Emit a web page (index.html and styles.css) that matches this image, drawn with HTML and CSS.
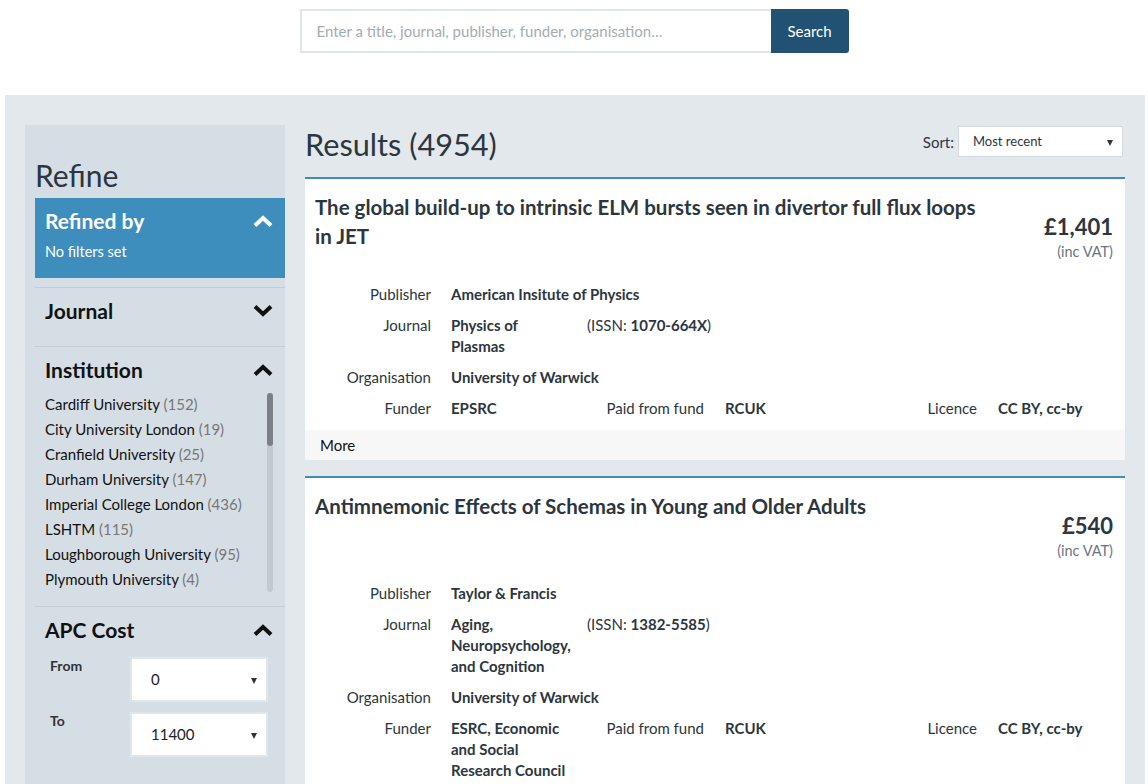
FILE: index.html
```html
<!DOCTYPE html>
<html lang="en">
<head>
<meta charset="utf-8">
<title>Results</title>
<link rel="stylesheet" href="styles.css">
</head>
<body>
<form class="search">
  <input class="search-input" type="text" placeholder="Enter a title, journal, publisher, funder, organisation…">
  <button class="search-btn" type="button">Search</button>
</form>

<div class="page">
  <aside class="sidebar">
    <h2 class="refine-title">Refine</h2>

    <div class="refined-by">
      <div class="facet-head">
        <span>Refined by</span>
        <svg class="chev" viewBox="0 0 20 12" width="20" height="12"><polyline points="2,10.5 10,3 18,10.5" fill="none" stroke="#fff" stroke-width="4"/></svg>
      </div>
      <p class="no-filters">No filters set</p>
    </div>

    <section class="facet facet-closed">
      <div class="facet-head">
        <span>Journal</span>
        <svg class="chev" viewBox="0 0 20 12" width="20" height="12"><polyline points="2,1.5 10,9 18,1.5" fill="none" stroke="#111" stroke-width="4"/></svg>
      </div>
    </section>

    <section class="facet">
      <div class="facet-head">
        <span>Institution</span>
        <svg class="chev" viewBox="0 0 20 12" width="20" height="12"><polyline points="2,10.5 10,3 18,10.5" fill="none" stroke="#111" stroke-width="4"/></svg>
      </div>
      <div class="facet-scroll">
        <ul class="facet-list">
          <li>Cardiff University <span class="count">(152)</span></li>
          <li>City University London <span class="count">(19)</span></li>
          <li>Cranfield University <span class="count">(25)</span></li>
          <li>Durham University <span class="count">(147)</span></li>
          <li>Imperial College London <span class="count">(436)</span></li>
          <li>LSHTM <span class="count">(115)</span></li>
          <li>Loughborough University <span class="count">(95)</span></li>
          <li>Plymouth University <span class="count">(4)</span></li>
        </ul>
        <div class="scroll-track"><div class="scroll-thumb"></div></div>
      </div>
    </section>

    <section class="facet">
      <div class="facet-head">
        <span>APC Cost</span>
        <svg class="chev" viewBox="0 0 20 12" width="20" height="12"><polyline points="2,10.5 10,3 18,10.5" fill="none" stroke="#111" stroke-width="4"/></svg>
      </div>
      <div class="range">
        <label class="range-label">From</label>
        <div class="select-box range-select"><span>0</span></div>
        <label class="range-label">To</label>
        <div class="select-box range-select"><span>11400</span></div>
      </div>
    </section>
  </aside>

  <main class="main">
    <div class="main-head">
      <h1 class="results-title">Results (4954)</h1>
      <div class="sort">
        <span class="sort-label">Sort:</span>
        <div class="select-box sort-select"><span>Most recent</span></div>
      </div>
    </div>

    <article class="card">
      <div class="card-body">
        <div class="card-head">
          <h3 class="card-title">The global build-up to intrinsic ELM bursts seen in divertor full flux loops in JET</h3>
          <div class="price">
            <div class="price-amount">£1,401</div>
            <div class="price-vat">(inc VAT)</div>
          </div>
        </div>
        <div class="details">
          <div class="dl">Publisher</div>
          <div class="dv span-rest">American Insitute of Physics</div>

          <div class="dl">Journal</div>
          <div class="dv">Physics of Plasmas</div>
          <div class="issn">(ISSN: <b>1070-664X</b>)</div>

          <div class="dl">Organisation</div>
          <div class="dv span-rest">University of Warwick</div>

          <div class="dl">Funder</div>
          <div class="dv">EPSRC</div>
          <div class="dl dl-mid">Paid from fund</div>
          <div class="dv">RCUK</div>
          <div class="dl dl-mid">Licence</div>
          <div class="dv">CC BY, cc-by</div>
        </div>
      </div>
      <div class="more">More</div>
    </article>

    <article class="card">
      <div class="card-body">
        <div class="card-head">
          <h3 class="card-title">Antimnemonic Effects of Schemas in Young and Older Adults</h3>
          <div class="price">
            <div class="price-amount">£540</div>
            <div class="price-vat">(inc VAT)</div>
          </div>
        </div>
        <div class="details">
          <div class="dl">Publisher</div>
          <div class="dv span-rest">Taylor &amp; Francis</div>

          <div class="dl">Journal</div>
          <div class="dv">Aging, Neuropsychology, and Cognition</div>
          <div class="issn">(ISSN: <b>1382-5585</b>)</div>

          <div class="dl">Organisation</div>
          <div class="dv span-rest">University of Warwick</div>

          <div class="dl">Funder</div>
          <div class="dv">ESRC, Economic and Social Research Council</div>
          <div class="dl dl-mid">Paid from fund</div>
          <div class="dv">RCUK</div>
          <div class="dl dl-mid">Licence</div>
          <div class="dv">CC BY, cc-by</div>
        </div>
      </div>
      <div class="more">More</div>
    </article>
  </main>
</div>
</body>
</html>
```

FILE: styles.css
```css
* { box-sizing: border-box; }

body {
  margin: 0;
  font-family: Lato, "Open Sans", "Liberation Sans", sans-serif;
  color: #2b3640;
  background: #fff;
}

/* Search */
.search {
  display: flex;
  width: 549px;
  height: 44px;
  margin: 9px auto 0;
}
.search-input {
  flex: 1;
  min-width: 0;
  border: 2px solid #dde4ea;
  border-right: 0;
  padding: 0 15px;
  font: 15px Lato, sans-serif;
  color: #2b3640;
  outline: none;
}
.search-input::placeholder { color: #a4acb4; }
.search-btn {
  width: 78px;
  border: 0;
  border-radius: 0 3px 3px 0;
  background: #215273;
  color: #fff;
  font: 15px Lato, sans-serif;
  padding: 0;
}

/* Page */
.page {
  width: 1140px;
  margin: 42px 0 0 5px;
  background: #e3e8ec;
  padding: 30px 20px 0;
  display: flex;
  gap: 20px;
  align-items: flex-start;
}

/* Sidebar */
.sidebar {
  width: 260px;
  flex: none;
  background: #d6dee5;
  padding: 33px 0 40px 10px;
}
.refine-title {
  margin: 0 0 6px;
  font-size: 30px;
  font-weight: 400;
  line-height: 34px;
  color: #2b3640;
}
.refined-by {
  background: #3d8ebd;
  color: #fff;
  padding: 8px 12px 16px 10px;
}
.facet-head {
  display: flex;
  justify-content: space-between;
  align-items: center;
  font-size: 21px;
  font-weight: 700;
  line-height: 30px;
}
.chev { display: block; }
.no-filters {
  margin: 6px 0 0;
  font-size: 14.5px;
  line-height: 20px;
}
.facet {
  margin-top: 9px;
  border-top: 1px solid #c5ccd2;
  padding: 8px 12px 14px 10px;
  color: #111;
}
.facet + .facet { margin-top: 0; }
.facet-closed { padding-bottom: 20px; }

.facet-scroll {
  display: flex;
  gap: 6px;
  margin-top: 7px;
  height: 200px;
}
.facet-list {
  flex: 1;
  list-style: none;
  margin: 0;
  padding: 0;
  overflow: hidden;
  font-size: 15px;
  line-height: 25px;
}
.scroll-track {
  width: 6px;
  margin: 1px 0 0;
  background: #c2cad1;
  border-radius: 3px;
}
.scroll-thumb {
  height: 53px;
  background: #7b8086;
  border-radius: 3px;
}
.count { color: #777; }

.range {
  display: grid;
  grid-template-columns: 80px 138px;
  row-gap: 10px;
  margin-top: 12px;
  padding-left: 5px;
}
.range-label {
  font-size: 14px;
  font-weight: 700;
  line-height: 18px;
  color: #333;
}
.select-box {
  position: relative;
  background: #fff;
}
.select-box::after {
  content: "";
  position: absolute;
  top: 50%;
  right: 9px;
  margin-top: -2px;
  border-left: 3.5px solid transparent;
  border-right: 3.5px solid transparent;
  border-top: 6px solid #333;
}
.range-select {
  height: 45px;
  border: 2px solid #e1e6ea;
  padding-left: 19px;
  font-size: 15px;
  line-height: 41px;
  color: #222;
}

/* Main */
.main { flex: 1; min-width: 0; }
.main-head {
  display: flex;
  justify-content: space-between;
  align-items: flex-start;
}
.results-title {
  margin: 3px 0 15px;
  font-size: 30.7px;
  font-weight: 400;
  line-height: 34px;
  color: #2b3640;
}
.sort {
  display: flex;
  align-items: center;
  gap: 4px;
  margin: 1px 2px 0 0;
}
.sort-label { font-size: 15px; }
.sort-select {
  width: 165px;
  height: 31px;
  border: 1px solid #d3dbe1;
  padding-left: 14px;
  font-size: 13px;
  line-height: 29px;
}

.card {
  background: #fff;
  border-top: 2px solid #3d8ebd;
  margin-bottom: 16px;
}
.card-body { padding: 14px 12px 11px 10px; }
.card-head {
  display: flex;
  justify-content: space-between;
  align-items: flex-start;
}
.card-title {
  margin: 0;
  max-width: 675px;
  font-size: 20.5px;
  font-weight: 700;
  line-height: 29px;
  color: #2b3640;
}
.price {
  margin-top: 19px;
  text-align: right;
}
.price-amount {
  font-size: 22px;
  font-weight: 700;
  line-height: 30px;
}
.price-vat {
  font-size: 14.5px;
  line-height: 20px;
  color: #6b7580;
}

.details {
  display: grid;
  grid-template-columns: 136px 136px 138px 155px 118px 1fr;
  row-gap: 10px;
  margin-top: 22px;
  font-size: 15px;
  line-height: 21px;
}
.dl {
  text-align: right;
  padding-right: 20px;
  grid-column: 1;
}
.dl-mid { grid-column: auto; padding-right: 21px; }
.dv {
  font-weight: 700;
  padding-right: 14px;
}
.span-rest { grid-column: 2 / -1; }
.issn { grid-column: 3 / span 2; }
.issn b { font-weight: 700; }

.more {
  background: #f7f7f7;
  height: 30px;
  line-height: 30px;
  padding-left: 15px;
  font-size: 15px;
  color: #111;
}
```
